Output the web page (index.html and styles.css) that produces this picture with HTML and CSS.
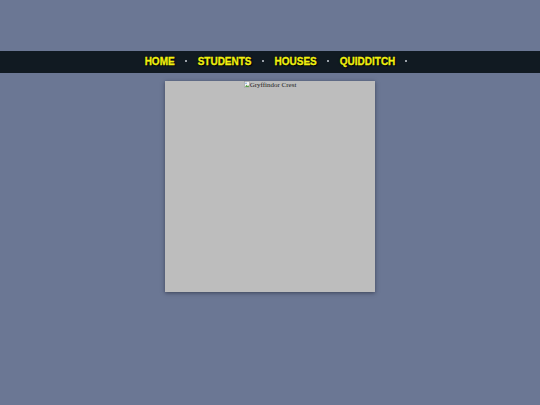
FILE: index.html
```html
<!DOCTYPE html>
<html>
<head>
<meta charset="utf-8">
<link rel="stylesheet" href="styles.css">
</head>
<body>
<header class="top"></header>
<nav class="nav">
  <ul class="menu">
    <li class="item"><a href="#">HOME</a><span class="dot"></span></li>
    <li class="item"><a href="#">STUDENTS</a><span class="dot"></span></li>
    <li class="item"><a href="#">HOUSES</a><span class="dot"></span></li>
    <li class="item"><a href="#">QUIDDITCH</a><span class="dot"></span></li>
  </ul>
</nav>
<main class="main">
  <div class="card">
    <div class="alt">
      <svg class="broken" width="6" height="7" viewBox="0 0 6 7">
        <rect x="0.5" y="0.5" width="5" height="6" fill="#f4f4f4" stroke="#9a9a9a" stroke-width="0.6"/>
        <path d="M1 6 L2.5 3.8 L3.6 5 L4.4 4.2 L5.2 6 Z" fill="#5aa04a"/>
        <circle cx="2" cy="2.2" r="0.7" fill="#5b8fd0"/>
      </svg><span class="alt-text">Gryffindor Crest</span>
    </div>
  </div>
</main>
</body>
</html>
```
FILE: styles.css
```css
html, body {
  margin: 0;
  padding: 0;
}
body {
  background: #6b7794;
  width: 540px;
  height: 405px;
  overflow: hidden;
  font-family: "Liberation Sans", Arial, sans-serif;
}
.top {
  height: 51px;
}
.nav {
  height: 22px;
  background: #111a22;
  display: flex;
  align-items: center;
  justify-content: center;
}
.menu {
  list-style: none;
  margin: 0;
  padding: 0 0 0 12px;
  display: flex;
  align-items: center;
}
.item {
  display: flex;
  align-items: center;
  margin-right: 11px;
}
.item:last-child {
  margin-right: 0;
}
.item a {
  color: #f0f010;
  text-decoration: none;
  font-weight: bold;
  font-size: 10px;
  line-height: 12px;
  text-shadow: 0 0 2px #000, 1px 1px 1px #000;
  -webkit-text-stroke: 0.3px #f0f010;
}
.dot {
  display: block;
  width: 2px;
  height: 2px;
  background: #9aa0a8;
  margin-left: 10px;
  margin-top: -3px;
}
.main {
  display: flex;
  justify-content: center;
  padding-top: 8px;
}
.card {
  width: 210px;
  height: 211px;
  background: #bdbdbd;
  box-shadow: 0 1px 4px rgba(30, 35, 50, 0.6);
}
.alt {
  display: flex;
  justify-content: center;
  align-items: flex-start;
}
.broken {
  display: block;
}
.alt-text {
  font-family: "Liberation Serif", "Times New Roman", serif;
  font-size: 7px;
  line-height: 8px;
  color: #222;
}
```
